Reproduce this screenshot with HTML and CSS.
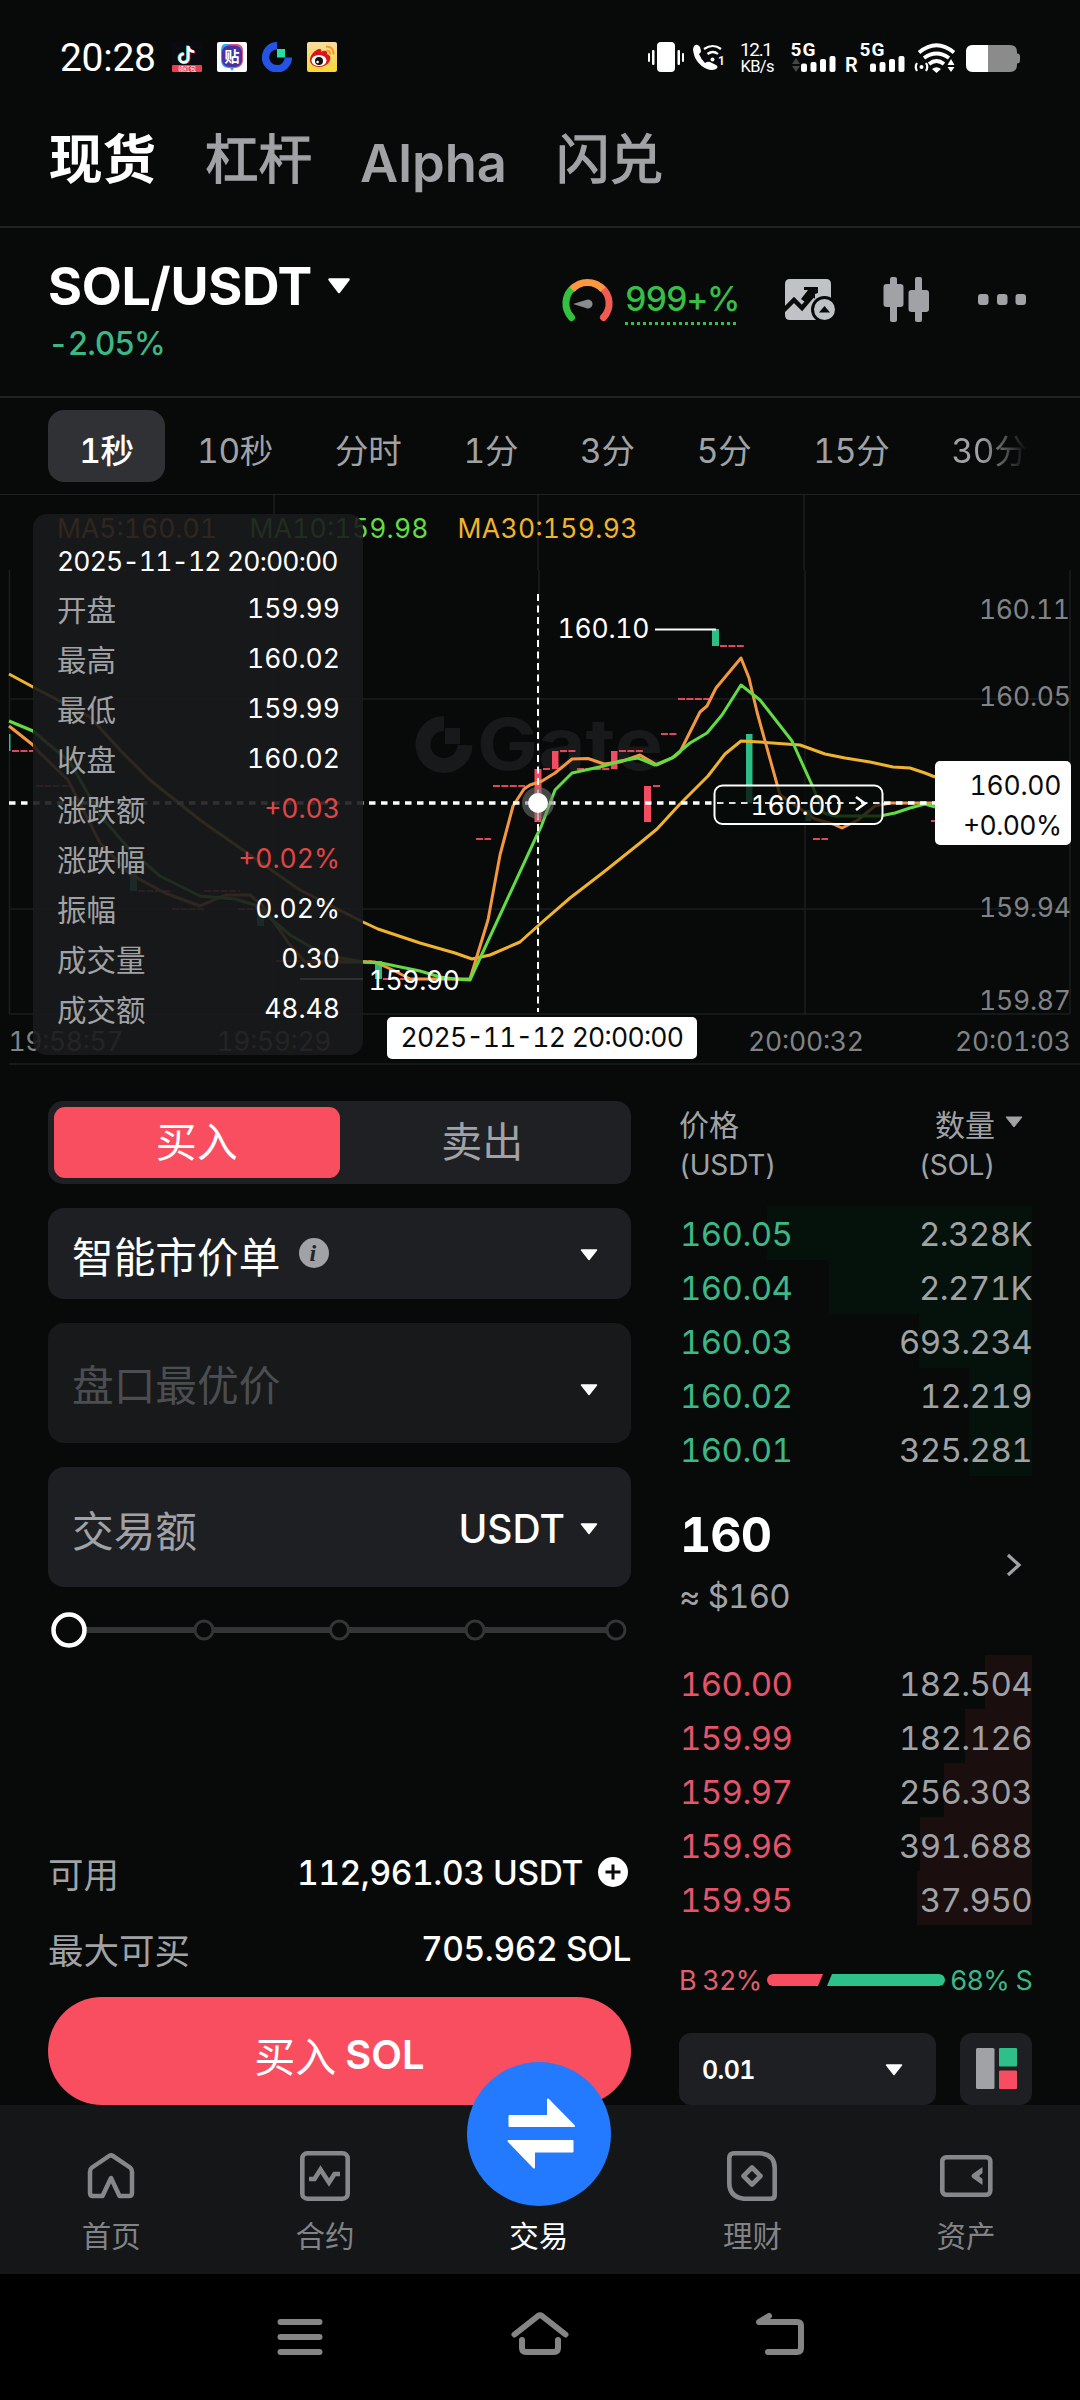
FILE: index.html
```html
<!DOCTYPE html>
<html lang="zh-CN">
<head>
<meta charset="utf-8">
<title>SOL/USDT</title>
<link rel="stylesheet" href="styles.css">
</head>
<body>
<div class="phone">
  <header class="status">
    <span class="clock">20:28</span>
    <svg class="app" viewBox="0 0 30 30"><rect width="30" height="30" fill="#0a0a10"/><g fill="none" stroke-width="2.600"><path d="M15.400 3.500v12.200a4.300 4.300 0 1 1-4.300-4.300M15.400 4c.5 3 2.500 5 6 5.200" stroke="#25e6e0"/><path d="M17 4.500v12a4.300 4.300 0 1 1-4.300-4.300M17 5c.5 3 2.500 5 6 5.200" stroke="#fb2c55"/><path d="M16.200 4v12.200a4.300 4.300 0 1 1-4.300-4.300M16.200 4.500c.5 3 2.500 5 6 5.200" stroke="#fff"/></g><rect y="23" width="30" height="7" rx="1" fill="#ea3f50"/><text x="6" y="29" font-size="6" fill="#fff" font-family="Noto Sans CJK SC">领红包</text></svg>
    <svg class="app" viewBox="0 0 30 30"><rect width="30" height="30" rx="2" fill="#fff"/><path d="M10 2h9q7 0 7 7v8q0 8-7 9h-2l-2 3-2-3h-2q-7-1-7-8v-9q0-7 4-7z" fill="#3aa0f5"/><path d="M12 2h8q6 1 6 7v8q0 7-6 8h-5z" fill="#f0507c"/><rect x="5" y="3.500" width="20" height="21.500" rx="7" fill="#4734a4"/><text x="7.500" y="20" font-size="15" fill="#fff" font-weight="700" font-family="Noto Sans CJK SC">贴</text></svg>
    <svg class="app" viewBox="0 0 30 30"><path d="M15 3.800A11.500 11.500 0 1 0 26.500 15.500" fill="none" stroke="#2354e6" stroke-width="7.400"/><rect x="15" y="7" width="8" height="8.500" fill="#24dfa5"/></svg>
    <svg class="app" viewBox="0 0 30 30"><defs><linearGradient id="wb" x1="0" y1="0" x2="0" y2="1"><stop offset="0" stop-color="#f8dda0"/><stop offset="1" stop-color="#fbd732"/></linearGradient></defs><rect width="30" height="30" rx="2" fill="url(#wb)"/><path d="M3 18c0-5 5-10 9-11 2-.5 3 1 2 3 3-2 7-2 6 2 3 1 4 3 3 6-1 4-6 7-11 7s-9-3-9-7z" fill="#d8151b"/><ellipse cx="12" cy="18.500" rx="7.500" ry="5.500" fill="#fff"/><circle cx="12" cy="19" r="4" fill="#111"/><circle cx="10.600" cy="20" r="1.300" fill="#fff"/><path d="M19 4.500q8 0 7.500 8M19.500 8.500q4 0 3.500 4" fill="none" stroke="#f29b28" stroke-width="2"/></svg>
    <svg class="signals" viewBox="640 36 390 42">
      <g fill="#fff">
        <rect x="657" y="42" width="18" height="30" rx="4"/>
        <rect x="652" y="50" width="2.500" height="15" rx="1"/><rect x="648" y="53" width="2" height="9" rx="1"/>
        <rect x="677.500" y="50" width="2.500" height="15" rx="1"/><rect x="682" y="53" width="2" height="9" rx="1"/>
        <path d="M694 46q3-3 6 1l1 4q0 2-2 3 2 5 6 9 3-2 5-1l6 3q3 2 0 4-4 2-9 0-13-6-14-20z"/>
        <circle cx="712.500" cy="59.500" r="2"/>
        <rect x="801" y="63.500" width="6" height="8.500" rx="2"/><rect x="810.500" y="62" width="6" height="10" rx="2"/><rect x="820" y="59" width="6" height="13" rx="2"/><rect x="829.500" y="56" width="6" height="16" rx="2"/>
        <rect x="870" y="63.500" width="6" height="8.500" rx="2"/><rect x="879.500" y="62" width="6" height="10" rx="2"/><rect x="889" y="59" width="6" height="13" rx="2"/><rect x="898.500" y="56" width="6" height="16" rx="2"/>
        <path d="M932 69q4.500-3.500 9 0l-4.500 4zM947.500 65l3.500-6 3.500 6zM947.500 67l3.500 5 3.500-5z"/><circle cx="921.500" cy="67" r="2"/>
      </g>
      <g fill="none" stroke="#fff" stroke-width="2.200"><path d="M704 49q9-6 17 0M707.500 54q5.500-4 10.500 0"/><path d="M917 63q-2.500 4 0 8M926 63q2.500 4 0 8"/></g>
      <g fill="none" stroke="#fff" stroke-width="3.800"><path d="M919 52.500q17.500-14.500 35 0M924 58q12.500-9 25 0M929 64q7.500-6 15 0"/></g>
      <path d="M792 64l4-6 4 6zM792 66l4 6 4-6z" fill="#444"/>
      <g class="sig-text">
        <text x="740" y="56" font-size="19" textLength="33">12.1</text><text x="740.500" y="72" font-size="16.500" textLength="34">KB/s</text>
        <text x="790.500" y="56" font-size="19" font-weight="700" textLength="25">5G</text><text x="859.500" y="56" font-size="19" font-weight="700" textLength="25">5G</text>
        <text x="845" y="72" font-size="20" font-weight="600">R</text><text x="718" y="65" font-size="12" font-weight="600">1</text>
      </g>
      <path d="M973 45h37q7 0 7 7v1.500q3 0 3 3v4q0 3-3 3V65q0 7-7 7h-37q-7 0-7-7V52q0-7 7-7z" fill="#8b8b8b"/>
      <path d="M988 45h-15q-7 0-7 7v13q0 7 7 7h15z" fill="#fff"/>
    </svg>
  </header>

  <nav class="tabs">
    <span class="tab tab-on">现货</span><span class="tab">杠杆</span><span class="tab tab-latin">Alpha</span><span class="tab">闪兑</span>
  </nav>

  <section class="pair">
    <div class="pair-id">
      <div class="pair-name">SOL/USDT<svg class="caret-l" viewBox="0 0 24 16"><path d="M2.500 1.500h19L12 14z" fill="#fff" stroke="#fff" stroke-width="2.500" stroke-linejoin="round"/></svg></div>
      <div class="pair-change">-2.05%</div>
    </div>
    <svg class="gauge" viewBox="560 275 56 50"><g fill="none" stroke-width="7"><path d="M571.500 317.500A20.500 20.500 0 0 1 573.500 287.500" stroke="#32c23d" stroke-linecap="round"/><path d="M603.500 317.500A20.500 20.500 0 0 0 601.500 287.500" stroke="#f25c50" stroke-linecap="round"/><path d="M572 289.500A20.500 20.500 0 0 1 603 289.500" stroke="#fd9840"/></g><path d="M573 304l13-4a4.500 4.500 0 1 1 0 8z" fill="#8a8b8f"/></svg>
    <div class="heat">999+%</div>
    <svg class="pair-icons" viewBox="780 270 250 60">
      <path d="M785 284q0-5 5-5h36q5 0 5 5v19a13 13 0 0 0-14 17h-27q-5 0-5-5z" fill="#c0c3c6"/>
      <path d="M783 311l11-11 8 8 11-13" fill="none" stroke="#070a09" stroke-width="4.500"/><path d="M804 287h14v6l-3 1v5l-4-4-6 7-4-3 7-9h-4z" fill="#070a09"/>
      <circle cx="824.500" cy="309.500" r="13.500" fill="#070a09"/><circle cx="824.500" cy="309.500" r="10.500" fill="#c0c3c6"/><path d="M819 312.500h11l-5.500-6.500z" fill="#070a09"/>
      <g fill="#a0a2a5"><rect x="890" y="277" width="7" height="45" rx="2"/><rect x="883.500" y="284" width="20" height="23" rx="3"/><rect x="915" y="277" width="7" height="45" rx="2"/><rect x="908.500" y="290" width="20.500" height="22" rx="3"/>
      <rect x="978" y="294" width="10.500" height="11" rx="3"/><rect x="997" y="294" width="10.500" height="11" rx="3"/><rect x="1015.500" y="294" width="10.500" height="11" rx="3"/></g>
    </svg>
  </section>

  <nav class="spans">
    <span class="span span-on">1秒</span><span class="span">10秒</span><span class="span">分时</span><span class="span">1分</span><span class="span">3分</span><span class="span">5分</span><span class="span">15分</span><span class="span span-fade">30分</span>
  </nav>

  <section class="chart">
    <svg class="plot" viewBox="0 495 1080 570">
      <g stroke="#1b1e1e" stroke-width="1.500" fill="none"><path d="M274 495V570M538 495V570M804 495V570M9.500 570V1014M273 570V1014M539 570V1014M805 570V1014M1070 570V1014M9 699H1070M9 909H1070M9 1014H1070M9 1064H1080"/></g>
      <g fill="none" stroke="#17191a" stroke-width="15"><path d="M444 723.500A21 21 0 1 0 465 745"/></g><rect x="445" y="728" width="15" height="16" fill="#17191a"/>
      <text class="mark" x="477" y="770" textLength="186" lengthAdjust="spacingAndGlyphs">Gate</text>
      <g class="legend"><text x="57" y="538" fill="#f39840" textLength="160">MA5:160.01</text><text x="249.500" y="538" fill="#63db43" textLength="179">MA10:159.98</text><text x="457.500" y="538" fill="#f0b32e" textLength="180">MA30:159.93</text></g>
      <g stroke="#e0475b" stroke-width="2" stroke-dasharray="7 1.400" fill="none"><path d="M12 751H33M36 786H70M138 891H172M172 909H204M204 891H240M238 909H258M276 961H372M383 979H470M476 839H491M493 786H530M543 769H551M560 751H576M577 769H610M619 751H643M653 786H660M661 734H677M678 699H709M720 646H744M813 839H828M931 821H936"/></g>
      <g fill="#f54b60"><rect x="534.500" y="769" width="7" height="53"/><rect x="552" y="751" width="6.500" height="18"/><rect x="611" y="751" width="6.500" height="18"/><rect x="644" y="786" width="7" height="36"/></g>
      <g fill="#2dbe87"><rect x="9" y="734" width="1.500" height="17"/><rect x="130" y="873" width="7" height="18"/><rect x="257" y="909" width="7" height="17"/><rect x="375" y="961" width="7" height="18"/><rect x="712" y="629" width="7" height="17"/><rect x="746" y="734" width="6.500" height="69"/><rect x="805.500" y="810" width="6" height="11"/></g>
      <g fill="none" stroke-width="3" stroke-linejoin="round">
        <path stroke="#f0b32e" d="M9 674L33 687 90 717 120 750 150 780 200 820 250 855 300 890 363 922 378 929 420 943 455 953 472 959 490 955 520 942 540 924 570 898 605 871 640 843 657 829 680 804 708 776 725 754 741 741 760 742 800 745 825 754 845 758 870 762 893 767 910 768 925 773 935 777"/>
        <path stroke="#f39840" d="M9 726L33 745 40 753 68 780 100 843 130 874 165 893 200 906 225 895 250 895 262 905 290 945 305 962H375L395 971 410 979H470L488 920 500 855 513 806 524 789 530 785 542 781 555 773 572 759 588 758.500 604 764 620 762 640 755 657 765 674 757 680 752 700 712 707 706 716 688 741 658 749 678 757 712 780 795 792 803 815 819 833 824 842 828 858 820 875 806 890 803H935"/>
        <path stroke="#63db43" d="M9 721L33 731 70 762 100 815 130 850 160 876 200 896 235 899 255 905 290 935 325 955 363 962 381 963 420 971 440 977 455 979 470 980 537 835 541 827 555 790 572 773 604 766 620 761 638 758 655 765 672 758 690 743 707 733 722 715 741 685 760 700 792 741 812 785 824 813 835 816H880L895 813 910 808 925 804 935 807"/>
      </g>
      <path d="M655 629.500H716M300 979H363" stroke="#fff" stroke-width="2"/>
      <g class="num" fill="#fff"><text x="557.500" y="638" textLength="92">160.10</text><text x="368.500" y="990" textLength="91.500">159.90</text></g>
      <g class="num" fill="#818386"><text x="979" y="619" textLength="91">160.11</text><text x="979" y="706" textLength="92">160.05</text><text x="979" y="917" textLength="92">159.94</text><text x="979" y="1010" textLength="92">159.87</text>
      <text x="8.500" y="1051" textLength="115">19:58:57</text><text x="216.500" y="1051" textLength="115">19:59:29</text><text x="748" y="1051" textLength="116">20:00:32</text><text x="955" y="1051" textLength="116">20:01:03</text></g>
      <rect x="714.500" y="785.500" width="168" height="38.500" rx="8" fill="#070a09" fill-opacity=".78" stroke="#fff" stroke-width="2"/>
      <path d="M538 594V1012" stroke="#fff" stroke-width="2" stroke-dasharray="7 4.500"/>
      <path d="M9 803H714M884 803H935" stroke="#fff" stroke-width="3.400" stroke-dasharray="6.500 5.500"/><path d="M717 803H882" stroke="#ddd" stroke-width="2" stroke-dasharray="6.500 5.500"/>
      <circle cx="538" cy="803" r="16" fill="#777" fill-opacity=".55"/><circle cx="538" cy="803" r="10" fill="#fff"/>
      <g class="num" fill="#fff"><text x="750.500" y="815" textLength="92">160.00</text></g><path d="M856 797l9 6.500-9 6.500" fill="none" stroke="#fff" stroke-width="2.500"/>
      <rect x="935" y="761" width="136" height="84" rx="5" fill="#fff"/><rect x="387" y="1017" width="310" height="42" rx="5" fill="#fff"/>
      <g class="num" fill="#090b0b"><text x="969.500" y="795" textLength="92">160.00</text><text x="963" y="835" textLength="99">+0.00%</text><text x="400.500" y="1047" textLength="283.500">2025-11-12 20:00:00</text></g>
    </svg>
    <div class="tip">
      <div class="tip-date">2025-11-12 20:00:00</div>
      <div class="tip-row"><span>开盘</span><b>159.99</b></div>
      <div class="tip-row"><span>最高</span><b>160.02</b></div>
      <div class="tip-row"><span>最低</span><b>159.99</b></div>
      <div class="tip-row"><span>收盘</span><b>160.02</b></div>
      <div class="tip-row"><span>涨跌额</span><b class="up">+0.03</b></div>
      <div class="tip-row"><span>涨跌幅</span><b class="up">+0.02%</b></div>
      <div class="tip-row"><span>振幅</span><b>0.02%</b></div>
      <div class="tip-row"><span>成交量</span><b>0.30</b></div>
      <div class="tip-row"><span>成交额</span><b>48.48</b></div>
    </div>
  </section>

  <main class="trade">
    <section class="form">
      <div class="sides"><span class="side side-on">买入</span><span class="side">卖出</span></div>
      <div class="field field-type"><span>智能市价单</span><svg class="info" viewBox="0 0 30 30"><circle cx="15" cy="15" r="15" fill="#a0a2a6"/><text x="10.500" y="23" font-family="Liberation Serif, serif" font-style="italic" font-weight="700" font-size="24" fill="#222427">i</text></svg><svg class="caret" viewBox="0 0 18 12"><path d="M1.500 1h15L9 10.500z" fill="#fff" stroke="#fff" stroke-width="1.500" stroke-linejoin="round"/></svg></div>
      <div class="field field-off"><span>盘口最优价</span><svg class="caret" viewBox="0 0 18 12"><path d="M1.500 1h15L9 10.500z" fill="#fff" stroke="#fff" stroke-width="1.500" stroke-linejoin="round"/></svg></div>
      <div class="field field-amount"><span>交易额</span><em>USDT</em><svg class="caret" viewBox="0 0 18 12"><path d="M1.500 1h15L9 10.500z" fill="#fff" stroke="#fff" stroke-width="1.500" stroke-linejoin="round"/></svg></div>
      <svg class="slider" viewBox="48 1588 583 84"><path d="M80 1631H616" stroke="#343536" stroke-width="6"/><g fill="#070a09" stroke="#343536" stroke-width="3"><circle cx="204" cy="1631" r="9"/><circle cx="339.500" cy="1631" r="9"/><circle cx="475" cy="1631" r="9"/><circle cx="616" cy="1631" r="9"/></g><circle cx="69" cy="1631" r="15.500" fill="#070a09" stroke="#fff" stroke-width="4.500"/></svg>
      <div class="line"><span>可用</span><b>112,961.03 USDT</b><svg class="plus" viewBox="0 0 30 30"><circle cx="15" cy="15" r="15" fill="#fff"/><path d="M15 7.500v15M7.500 15h15" stroke="#070a09" stroke-width="3"/></svg></div>
      <div class="line"><span>最大可买</span><b>705.962 SOL</b></div>
      <div class="submit">买入&nbsp;<b>SOL</b></div>
    </section>

    <section class="book">
      <div class="book-head"><div>价格<br><small>(USDT)</small></div><div class="qty">数量<br><small>(SOL)</small></div><svg class="caret-g" viewBox="0 0 18 12"><path d="M1 1h16L9 11z" fill="#a0a2a5" stroke="#a0a2a5" stroke-linejoin="round"/></svg></div>
      <div class="rows green">
        <div class="row"><i style="width:265px"></i><span>160.05</span><b>2.328K</b></div>
        <div class="row"><i style="width:203px"></i><span>160.04</span><b>2.271K</b></div>
        <div class="row"><i style="width:113px"></i><span>160.03</span><b>693.234</b></div>
        <div class="row"><i style="width:63px"></i><span>160.02</span><b>12.219</b></div>
        <div class="row"><i style="width:63px"></i><span>160.01</span><b>325.281</b></div>
      </div>
      <div class="last"><div><strong>160</strong><p>≈ $160</p></div><svg class="chev" viewBox="0 0 16 24"><path d="M2 2l11 10L2 22" fill="none" stroke="#a0a2a5" stroke-width="3.200"/></svg></div>
      <div class="rows red">
        <div class="row"><i style="width:47px"></i><span>160.00</span><b>182.504</b></div>
        <div class="row"><i style="width:67px"></i><span>159.99</span><b>182.126</b></div>
        <div class="row"><i style="width:88px"></i><span>159.97</span><b>256.303</b></div>
        <div class="row"><i style="width:112px"></i><span>159.96</span><b>391.688</b></div>
        <div class="row"><i style="width:115px"></i><span>159.95</span><b>37.950</b></div>
      </div>
      <div class="ratio"><span class="rb">B 32%</span><svg class="ratio-bar" viewBox="0 0 178 12"><path d="M6 0h50l-5 12H6A6 6 0 0 1 6 0z" fill="#f84d60"/><path d="M65 0h107a6 6 0 0 1 0 12H60z" fill="#2dc088"/></svg><span class="rs">68% S</span></div>
      <div class="tools"><div class="step">0.01<svg class="caret" viewBox="0 0 18 12"><path d="M1.500 1h15L9 10.500z" fill="#fff" stroke="#fff" stroke-width="1.500" stroke-linejoin="round"/></svg></div>
      <div class="mode"><svg viewBox="0 0 41 41"><rect width="18.500" height="41" rx="1.500" fill="#a0a2a6"/><rect x="23" width="18" height="18.500" rx="1" fill="#2dc088"/><rect x="23" y="22.500" width="18" height="18.500" rx="1" fill="#f84d60"/></svg></div></div>
    </section>
  </main>

  <nav class="dock">
    <div class="item"><svg viewBox="0 0 54 54"><path d="M6 22.500q0-2.500 2-4L25 7q2-1.300 4 0l17 11.500q2 1.500 2 4V44q0 3-3 3H35.500L27 29 18.500 47H9q-3 0-3-3z" fill="none" stroke="#85878a" stroke-width="4.500" stroke-linejoin="round"/></svg>首页</div>
    <div class="item"><svg viewBox="0 0 54 54"><rect x="4.300" y="4.300" width="45.400" height="45.400" rx="5" fill="none" stroke="#85878a" stroke-width="4.600"/><path d="M11 30h5.500l6-9.500 8.500 13 5.500-8.500H42" fill="none" stroke="#85878a" stroke-width="4.600"/></svg>合约</div>
    <div class="item item-on"><svg viewBox="0 0 54 54"></svg>交易</div>
    <div class="item"><svg viewBox="0 0 54 54"><path d="M9 4.300H35q14.700 1 14.700 15V46q0 3.700-4 3.700H19Q4.300 48 4.300 34V9q0-4.700 4.700-4.700zM27 18.500l8.500 8.500-8.500 8.500-8.500-8.500z" fill="none" stroke="#85878a" stroke-width="4.600" stroke-linejoin="round"/></svg>理财</div>
    <div class="item"><svg viewBox="0 0 54 54"><rect x="3.300" y="8.200" width="48" height="37.600" rx="4" fill="none" stroke="#85878a" stroke-width="4.600"/><path d="M43.500 18v6l-3.500 3 3.500 3v6l-10-7q-2-2 0-4z" fill="#85878a"/></svg>资产</div>
    <div class="swap"><svg viewBox="467 2062 144 144"><g fill="#fff" stroke="#fff" stroke-width="2" stroke-linejoin="round"><path d="M509.500 2116H548V2099.500L574 2126H509.500z"/><path d="M572.500 2141H508.500L534 2167.500V2151.500H572.500z"/></g></svg></div>
  </nav>

  <footer class="sys">
    <svg viewBox="270 2300 540 70"><g fill="none" stroke="#858585" stroke-width="6" stroke-linecap="round" stroke-linejoin="round"><path d="M280.500 2322H319.500M280.500 2337H319.500M280.500 2352H319.500"/><path d="M514.500 2334.500L538 2316q2-1.500 4 0L565.500 2334.500M522 2340V2348q0 4 4 4H554q4 0 4-4V2340"/><path d="M768 2352H797q4 0 4-4V2326q0-4-4-4H759L769 2316"/></g></svg>
  </footer>
</div>
</body>
</html>
```
FILE: styles.css
```css
* { box-sizing: border-box; margin: 0; padding: 0; }
body { background: #070a09; color: #fff; font-family: Inter, "Noto Sans CJK SC", sans-serif; font-feature-settings: "tnum"; }
.phone { width: 1080px; height: 2400px; overflow: hidden; display: flex; flex-direction: column; background: #070a09; }
svg { display: block; flex: none; }
b, em, i, small { font-weight: inherit; font-style: normal; }

.status { height: 96px; padding: 0 50px 0 60px; display: flex; align-items: flex-start; }
.clock { width: 112px; font: 39px/46px Roboto, sans-serif; padding-top: 35px; letter-spacing: -.3px; }
.app { width: 30px; height: 30px; margin: 42px 15px 0 0; }
.signals { width: 390px; height: 42px; margin: 36px 0 0 auto; }
.sig-text { fill: #fff; font-family: Roboto, sans-serif; font-feature-settings: normal; }

.tabs { height: 132px; padding: 0 49px; display: flex; align-items: center; border-bottom: 2px solid #1f2122; }
.tab { font-size: 53.500px; line-height: 80px; font-weight: 400; -webkit-text-stroke: 1.300px currentColor; color: #a0a2a5; margin-right: 49px; margin-top: -2px; }
.tab-on { color: #fff; font-weight: 700; -webkit-text-stroke: 0; }
.tab-latin { font-size: 52.500px; font-weight: 600; -webkit-text-stroke: 0; margin: 3px 49px 0 -1px; }

.pair { height: 170px; padding: 0 50px 0 48px; display: flex; align-items: flex-start; border-bottom: 2px solid #1f2122; }
.pair-id { width: 512px; padding-top: 30px; }
.pair-name { display: flex; align-items: center; font-size: 52px; line-height: 58px; font-weight: 700; letter-spacing: -.3px; }
.caret-l { width: 24px; height: 16px; margin: 0 0 2px 15px; }
.pair-change { font-size: 32px; line-height: 44px; margin-top: 6px; font-weight: 500; color: #3cb786; letter-spacing: -1.100px; }
.gauge { width: 56px; height: 50px; margin-top: 47px; }
.heat { width: 111px; height: 51px; margin: 46px 0 0 9px; font-size: 33.500px; line-height: 50px; font-weight: 500; color: #38bd45; letter-spacing: -1.200px; white-space: nowrap; background: repeating-linear-gradient(90deg, #38bd45 0 3px, transparent 3px 6px) left bottom / 100% 3px no-repeat; }
.pair-icons { width: 250px; height: 60px; margin-left: auto; margin-top: 42px; }

.spans { height: 97px; padding: 12px 0 0 48px; display: flex; overflow: hidden; border-bottom: 1px solid #1f2122; font-size: 33.500px; line-height: 83px; color: #a0a2a5; }
.span { height: 72px; flex: none; white-space: nowrap; margin-right: 62px; letter-spacing: -.3px; }
.span-on { width: 117px; border-radius: 16px; background: #303134; color: #fff; text-align: center; font-weight: 500; margin-right: 32px; }
.span-fade { background: linear-gradient(90deg, #a0a2a5 40%, #070a09 100%); -webkit-background-clip: text; background-clip: text; color: transparent; }

.chart { position: relative; height: 570px; flex: none; }
.plot { width: 1080px; height: 570px; }
.num, .legend { font-size: 26.500px; }
.mark { font-size: 72px; font-weight: 700; fill: #17191a; }
.tip { position: absolute; left: 33px; top: 19px; width: 330px; height: 541px; padding: 29px 23px 0 24px; border-radius: 14px; background: rgba(25, 26, 28, .9); font-size: 26.500px; }
.tip-date { line-height: 36px; margin-bottom: 4px; letter-spacing: -.820px; white-space: nowrap; }
.tip-row { display: flex; justify-content: space-between; align-items: center; height: 50px; }
.tip-row span { font-size: 29.500px; color: #a0a2a5; }
.tip-row b.up { color: #e14545; }

.trade { height: 1040px; flex: none; overflow: hidden; display: flex; justify-content: space-between; padding: 36px 48px 0; }
.form { width: 583px; display: flex; flex-direction: column; }
.sides { height: 84px; padding: 6px; display: flex; border-radius: 15px; background: #1f2023; font-size: 41px; }
.side { flex: 1; line-height: 71px; text-align: center; color: #a0a2a5; }
.side-on { background: #f94d60; color: #fff; border-radius: 11px; }
.field { height: 120px; margin-top: 24px; padding: 3px 33px 0 24px; display: flex; align-items: center; border-radius: 16px; background: #1e1f23; font-size: 41.700px; flex: none; }
.field .caret { margin-left: auto; }
.field-type { height: 91px; }
.info { width: 30px; height: 30px; margin: 0 0 4px 19px; }
.caret { width: 18px; height: 12px; }
.field-off { background: #17191a; }
.field-off span { color: #4b4d50; margin-top: -3px; }
.field-off .caret { margin-top: 11px; }
.field-amount span { color: #a0a2a5; flex: 1; }
.field-amount em { font-size: 39px; font-weight: 500; }
.field-amount .caret { margin-left: 15px; }
.slider { width: 583px; height: 84px; margin-bottom: 176px; }
.line { height: 50px; margin-bottom: 26px; display: flex; align-items: center; font-size: 35.500px; flex: none; }
.line span { color: #a0a2a5; margin-right: auto; }
.line b { font-size: 33.500px; font-weight: 500; letter-spacing: -.4px; padding-top: 1px; }
.plus { width: 30px; height: 30px; margin: 0 3px 0 15px; }
.submit { height: 108px; margin-top: -2px; border-radius: 54px; background: #f94d60; display: flex; justify-content: center; align-items: center; font-size: 41px; flex: none; padding-top: 5px; }
.submit b { font-weight: 600; font-size: 40px; margin-left: -2px; padding-top: 2px; }

.book { width: 353px; display: flex; flex-direction: column; }
.book-head { height: 105px; display: flex; font-size: 30px; line-height: 39px; color: #a0a2a5; padding-top: 5px; }
.book-head small { font-size: 28px; letter-spacing: -.2px; }
.qty { margin-left: auto; text-align: right; }
.caret-g { width: 18px; height: 12px; margin: 10px 9px 0 10px; }
.row { position: relative; height: 54px; display: flex; justify-content: space-between; align-items: center; padding: 3px 0 0 1px; font-size: 33px; letter-spacing: -.6px; }
.row i { position: absolute; right: 0; top: 0; height: 54px; }
.row span, .row b { position: relative; }
.row b { color: #a0a2a5; }
.green { color: #3cb786; }
.green i { background: #05120c; }
.red { color: #e4546a; }
.red i { background: #1a0e0f; }
.last { height: 180px; display: flex; justify-content: space-between; align-items: center; }
.last strong { display: block; font-size: 48.500px; line-height: 60px; font-weight: 700; padding-left: 1px; margin-top: -8px; letter-spacing: -1px; }
.last p { font-size: 33px; line-height: 44px; margin-top: 9px; color: #a0a2a5; letter-spacing: -.8px; }
.chev { width: 16px; height: 24px; margin: 0 10px 1px 0; }
.ratio { height: 108px; padding-top: 2px; display: flex; align-items: center; justify-content: space-between; font-size: 27px; white-space: nowrap; letter-spacing: -.8px; }
.ratio-bar { width: 178px; height: 12px; }
.rb { color: #e0606f; }
.rs { color: #3cb786; }
.tools { display: flex; justify-content: space-between; }
.step { width: 257px; height: 72px; padding: 2px 33px 0 23px; border-radius: 12px; background: #1e1f23; display: flex; align-items: center; justify-content: space-between; font-size: 25px; font-weight: 600; letter-spacing: -.6px; }
.mode { width: 72px; height: 72px; border-radius: 12px; background: #1e1f23; display: grid; place-items: center; }
.mode svg { width: 41px; height: 41px; }

.dock { position: relative; height: 169px; flex: none; background: #141618; display: grid; grid-template-columns: repeat(5, 213.700px); padding-left: 4.500px; }
.item { display: flex; flex-direction: column; align-items: center; font-size: 29.500px; line-height: 40px; color: #818386; padding-top: 44px; gap: 13px; }
.item svg { width: 54px; height: 54px; }
.item-on { color: #fff; }
.swap { position: absolute; left: 467px; top: -43px; width: 144px; height: 144px; border-radius: 50%; background: #247aff; }
.sys { height: 126px; background: #000; display: flex; justify-content: center; padding-top: 26px; }
.sys svg { width: 540px; height: 70px; }
```
